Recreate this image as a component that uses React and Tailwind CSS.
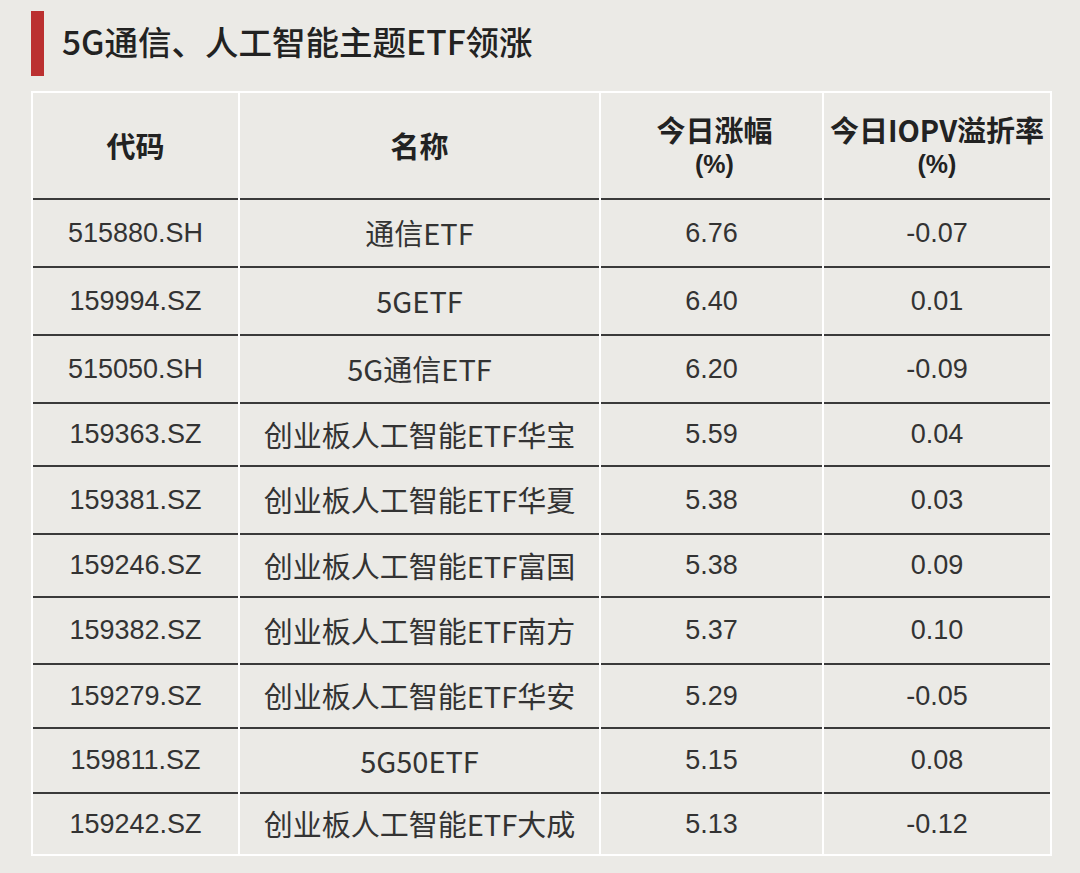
import React from "react";

const rows = [
  ["515880.SH", "通信ETF", "6.76", "-0.07", "h-[68px]"],
  ["159994.SZ", "5GETF", "6.40", "0.01", "h-[68px]"],
  ["515050.SH", "5G通信ETF", "6.20", "-0.09", "h-[68px]"],
  ["159363.SZ", "创业板人工智能ETF华宝", "5.59", "0.04", "h-[63px]"],
  ["159381.SZ", "创业板人工智能ETF华夏", "5.38", "0.03", "h-[68px]"],
  ["159246.SZ", "创业板人工智能ETF富国", "5.38", "0.09", "h-[63px]"],
  ["159382.SZ", "创业板人工智能ETF南方", "5.37", "0.10", "h-[67px]"],
  ["159279.SZ", "创业板人工智能ETF华安", "5.29", "-0.05", "h-[64px]"],
  ["159811.SZ", "5G50ETF", "5.15", "0.08", "h-[65px]"],
  ["159242.SZ", "创业板人工智能ETF大成", "5.13", "-0.12", "h-[62px]"],
];

const num = { fontFamily: '"Liberation Sans", Arial, sans-serif' };
const cjk = { fontFamily: '"Noto Sans CJK SC", "Liberation Sans", sans-serif' };

export default function App() {
  return (
    <div className="w-[1080px] h-[873px] bg-[#ebeae6] overflow-hidden">
      <div className="flex items-center pt-[11px] pl-[31px]">
        <div className="w-[13px] h-[65px] bg-[#bb3030]" />
        <div
          className="ml-[18px] text-[33.5px] leading-none text-[#222] font-medium -mt-[6px]"
          style={cjk}
        >
          5G通信、人工智能主题ETF领涨
        </div>
      </div>
      <div className="ml-[31px] mt-[15px] w-[1021px] border-2 border-white bg-white">
        <div
          className="grid grid-cols-[205px_359px_221px_226px] gap-x-[2px] h-[105px] text-[#222] font-bold text-[29px]"
          style={cjk}
        >
          <div className="bg-[#ebeae6] flex items-center justify-center">代码</div>
          <div className="bg-[#ebeae6] flex items-center justify-center">名称</div>
          <div className="bg-[#ebeae6] flex flex-col items-center justify-center pl-[6px]">
            <span className="leading-[34px]">今日涨幅</span>
            <span className="leading-[32px] text-[25px] pt-[2px]" style={num}>(%)</span>
          </div>
          <div className="bg-[#ebeae6] flex flex-col items-center justify-center">
            <span className="leading-[34px]">今日IOPV溢折率</span>
            <span className="leading-[32px] text-[25px] pt-[2px]" style={num}>(%)</span>
          </div>
        </div>
        {rows.map(([code, name, chg, prem, h]) => (
          <div
            key={code}
            className="grid grid-cols-[205px_359px_221px_226px] gap-x-[2px] text-[#333]"
          >
            <div
              className={`bg-[#ebeae6] border-t-2 border-[#3a3a3a] ${h} flex items-center justify-center text-[27px]`}
              style={num}
            >
              {code}
            </div>
            <div
              className={`bg-[#ebeae6] border-t-2 border-[#3a3a3a] ${h} flex items-center justify-center text-[29px]`}
              style={cjk}
            >
              {name}
            </div>
            <div
              className={`bg-[#ebeae6] border-t-2 border-[#3a3a3a] ${h} flex items-center justify-center text-[27px]`}
              style={num}
            >
              {chg}
            </div>
            <div
              className={`bg-[#ebeae6] border-t-2 border-[#3a3a3a] ${h} flex items-center justify-center text-[27px]`}
              style={num}
            >
              {prem}
            </div>
          </div>
        ))}
      </div>
    </div>
  );
}
